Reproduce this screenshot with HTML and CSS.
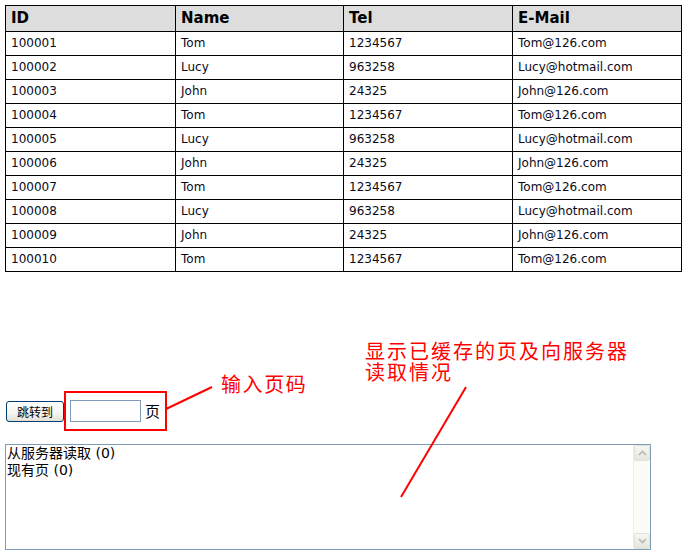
FILE: index.html
```html
<!DOCTYPE html>
<html>
<head>
<meta charset="utf-8">
<link rel="stylesheet" href="styles.css">
</head>
<body>
<div class="page">
  <table class="grid">
    <colgroup><col class="c1"><col class="c2"><col class="c3"><col class="c4"></colgroup>
    <thead><tr><th>ID</th><th>Name</th><th>Tel</th><th>E-Mail</th></tr></thead>
    <tbody>
      <tr><td>100001</td><td>Tom</td><td>1234567</td><td>Tom@126.com</td></tr>
      <tr><td>100002</td><td>Lucy</td><td>963258</td><td>Lucy@hotmail.com</td></tr>
      <tr><td>100003</td><td>John</td><td>24325</td><td>John@126.com</td></tr>
      <tr><td>100004</td><td>Tom</td><td>1234567</td><td>Tom@126.com</td></tr>
      <tr><td>100005</td><td>Lucy</td><td>963258</td><td>Lucy@hotmail.com</td></tr>
      <tr><td>100006</td><td>John</td><td>24325</td><td>John@126.com</td></tr>
      <tr><td>100007</td><td>Tom</td><td>1234567</td><td>Tom@126.com</td></tr>
      <tr><td>100008</td><td>Lucy</td><td>963258</td><td>Lucy@hotmail.com</td></tr>
      <tr><td>100009</td><td>John</td><td>24325</td><td>John@126.com</td></tr>
      <tr><td>100010</td><td>Tom</td><td>1234567</td><td>Tom@126.com</td></tr>
    </tbody>
  </table>

  <div class="pager">
    <button class="go" type="button">跳转到</button>
    <div class="hl"><input class="num" type="text"><span class="unit">页</span></div>
  </div>

  <div class="log">
    <div class="log-text">从服务器读取 (0)<br>现有页 (0)</div>
    <div class="sb">
      <div class="sb-btn"><svg width="9" height="6" viewBox="0 0 9 6"><path d="M1 5 L4.5 1.5 L8 5" fill="none" stroke="#b9b8ae" stroke-width="1.6"/></svg></div>
      <div class="sb-track"></div>
      <div class="sb-btn"><svg width="9" height="6" viewBox="0 0 9 6"><path d="M1 1 L4.5 4.5 L8 1" fill="none" stroke="#b9b8ae" stroke-width="1.6"/></svg></div>
    </div>
  </div>

  <div class="note note1">输入页码</div>
  <div class="note note2"><div class="nl">显示已缓存的页及向服务器</div><div class="nl">读取情况</div></div>
  <svg class="arrows" width="688" height="558" viewBox="0 0 688 558">
    <line x1="166" y1="409" x2="212" y2="387" stroke="#ff0000" stroke-width="2"/>
    <line x1="466" y1="387" x2="401" y2="497" stroke="#ff0000" stroke-width="2"/>
  </svg>
</div>
</body>
</html>
```

FILE: styles.css
```css
html, body {
  margin: 0;
  padding: 0;
  background: #ffffff;
}

.page {
  position: relative;
  width: 688px;
  height: 558px;
  box-sizing: border-box;
  padding: 5px 0 0 5px;
  overflow: hidden;
  font-family: "DejaVu Sans", "Noto Sans CJK SC", sans-serif;
  color: #000;
}

.grid {
  border-collapse: collapse;
  table-layout: fixed;
  width: 677px;
  border: 1px solid #000;
}

.c1 { width: 170px; }
.c2 { width: 168px; }
.c3 { width: 169px; }
.c4 { width: 169px; }

.grid th,
.grid td {
  border: 1px solid #000;
  padding: 0 5px;
  text-align: left;
  white-space: nowrap;
}

.grid th {
  background: #dddddd;
  font-weight: bold;
  font-size: 15px;
  line-height: 25px;
  height: 25px;
}

.grid td {
  font-size: 12px;
  line-height: 23px;
  height: 23px;
  color: #0a0a1a;
}

.pager {
  margin-top: 119px;
  margin-left: 1px;
  display: flex;
  align-items: center;
  height: 40px;
}

.go {
  width: 58px;
  height: 21px;
  box-sizing: border-box;
  margin: 0;
  padding: 0;
  border: 1px solid #003c74;
  border-radius: 3px;
  background: linear-gradient(#ffffff 0%, #f5f4ef 60%, #e3e0d4 100%);
  font-family: "Noto Sans CJK SC", sans-serif;
  font-size: 12px;
  line-height: 19px;
  color: #000;
}

.hl {
  box-sizing: border-box;
  width: 103px;
  height: 40px;
  border: 2px solid #ff0000;
  display: flex;
  align-items: center;
  padding-left: 4px;
  gap: 4px;
}

.num {
  width: 71px;
  height: 22px;
  box-sizing: border-box;
  margin: 0;
  padding: 0;
  border: 1px solid #7f9db9;
  outline: none;
}

.unit {
  font-family: "Noto Sans CJK SC", sans-serif;
  font-size: 15px;
  line-height: 18px;
}

.log {
  margin-top: 13px;
  width: 646px;
  height: 106px;
  box-sizing: border-box;
  border: 1px solid #7f9db9;
  display: flex;
}

.log-text {
  flex: 1;
  padding: 0 1px;
  font-family: "DejaVu Sans", "Noto Sans CJK SC", sans-serif;
  font-size: 14px;
  line-height: 17px;
}

.sb {
  width: 17px;
  display: flex;
  flex-direction: column;
  background: #fbfbf8;
  box-sizing: border-box;
  border-left: 1px solid #efeee7;
}

.sb-btn {
  height: 16px;
  box-sizing: border-box;
  border: 1px solid #e2e1d9;
  border-radius: 2px;
  background: linear-gradient(#f7f7f3, #e6e5dd);
  display: flex;
  align-items: center;
  justify-content: center;
}

.sb-track {
  flex: 1;
}

.note {
  position: absolute;
  color: #ff0000;
  font-family: "Noto Sans CJK SC", sans-serif;
  font-size: 20px;
  line-height: 21px;
  letter-spacing: 2px;
  white-space: nowrap;
}

.note1 {
  left: 221px;
  top: 373px;
  letter-spacing: 1.6px;
}

.note2 {
  left: 365px;
  top: 340px;
}

.nl {
  height: 21px;
}

.arrows {
  position: absolute;
  left: 0;
  top: 0;
  pointer-events: none;
}
```
